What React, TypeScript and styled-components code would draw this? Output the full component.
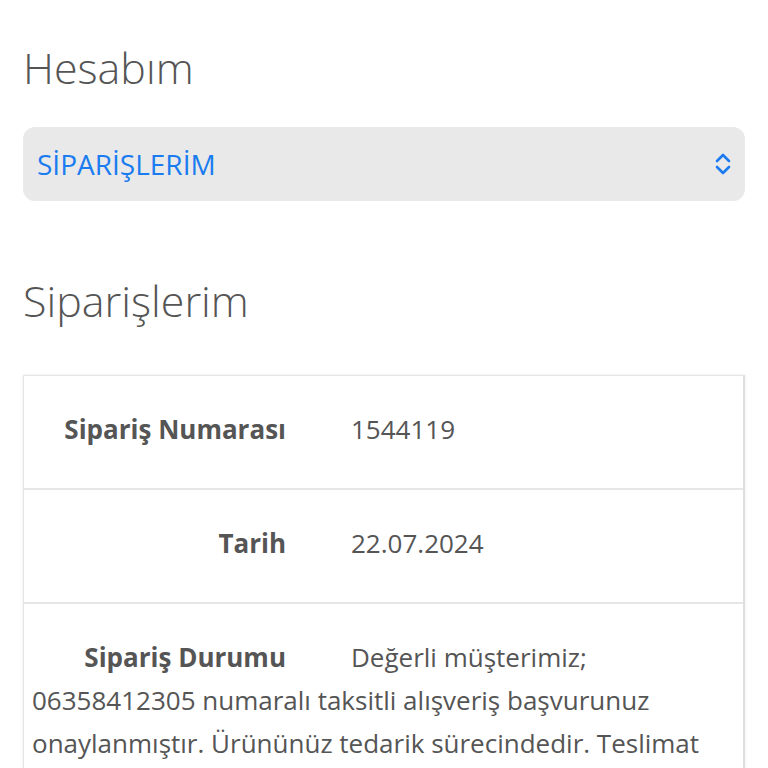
import React from "react";
import styled, { createGlobalStyle } from "styled-components";

const Global = createGlobalStyle`
  html, body { margin: 0; padding: 0; background: #fff; }
  body { font-family: "Open Sans", Lato, sans-serif; color: #555; }
`;

const Page = styled.div`
  padding: 38px 23px 0 23px;
  display: flex;
  flex-direction: column;
`;

const Title = styled.h1`
  margin: 0;
  font-size: 43px;
  font-weight: 300;
  color: #555;
  line-height: 60px;
`;

const SelectBox = styled.div`
  margin-top: 29px;
  height: 74px;
  border-radius: 12px;
  background: #e9e9e9;
  display: flex;
  align-items: center;
  justify-content: space-between;
  padding: 0 12px 0 14px;
`;

const SelectText = styled.span`
  font-size: 28px;
  color: #1a7cf0;
`;

const SectionTitle = styled(Title)`
  margin-top: 70px;
`;

const Card = styled.div`
  margin-top: 44px;
  border-top: 1px solid #e6e6e6;
  border-left: 1px solid #e4e4e4;
  border-right: 2px solid #dedede;
  box-shadow: 0 0 3px rgba(0,0,0,0.08);
`;

const Row = styled.div`
  padding: 32px 8px 37px 8px;
  border-bottom: 2px solid #e6e6e6;
  font-size: 26px;
  line-height: 43px;
  color: #555;
`;

const Label = styled.span`
  display: inline-block;
  width: 254px;
  text-align: right;
  font-weight: 700;
  margin-right: 65px;
  color: #555;
`;

const Chevron = () => (
  <svg width="20" height="26" viewBox="0 0 20 26" fill="none" stroke="#1a7cf0" strokeWidth="2.6" strokeLinecap="round" strokeLinejoin="round">
    <path d="M4 10 L10 4 L16 10" />
    <path d="M4 16 L10 22 L16 16" />
  </svg>
);

export default function App() {
  return (
    <>
      <Global />
      <Page>
        <Title>Hesabım</Title>
        <SelectBox>
          <SelectText>SİPARİŞLERİM</SelectText>
          <Chevron />
        </SelectBox>
        <SectionTitle>Siparişlerim</SectionTitle>
        <Card>
          <Row>
            <Label>Sipariş Numarası</Label>1544119
          </Row>
          <Row>
            <Label>Tarih</Label>22.07.2024
          </Row>
          <Row>
            <Label>Sipariş Durumu</Label>Değerli müşterimiz; 06358412305 numaralı taksitli alışveriş başvurunuz onaylanmıştır. Ürününüz tedarik sürecindedir. Teslimat bilgileri için sizinle iletişime geçilecektir.
          </Row>
        </Card>
      </Page>
    </>
  );
}
